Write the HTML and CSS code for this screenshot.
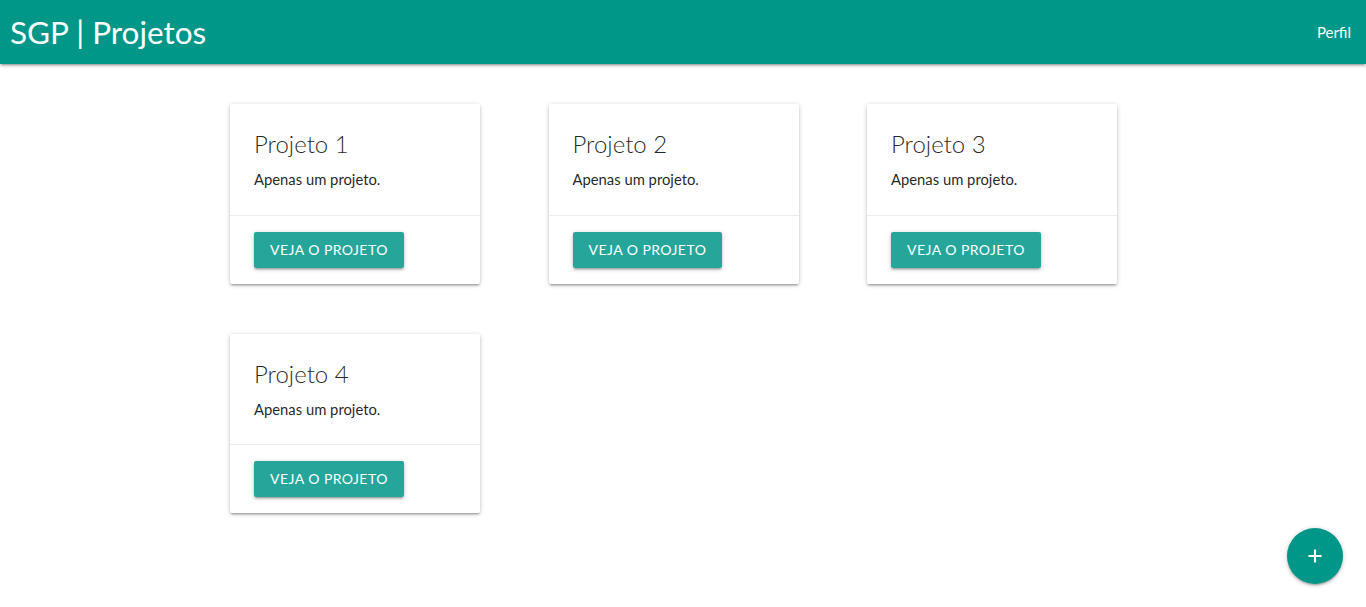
FILE: index.html
```html
<!DOCTYPE html>
<html lang="pt">
<head>
<meta charset="utf-8">
<title>SGP | Projetos</title>
<link rel="stylesheet" href="styles.css">
</head>
<body>
<nav class="navbar">
  <a class="brand" href="#">SGP | Projetos</a>
  <a class="nav-link" href="#">Perfil</a>
</nav>
<main class="grid">
  <div class="card">
    <div class="card-content">
      <span class="card-title">Projeto 1</span>
      <p>Apenas um projeto.</p>
    </div>
    <div class="card-action"><a class="btn" href="#">VEJA O PROJETO</a></div>
  </div>
  <div class="card">
    <div class="card-content">
      <span class="card-title">Projeto 2</span>
      <p>Apenas um projeto.</p>
    </div>
    <div class="card-action"><a class="btn" href="#">VEJA O PROJETO</a></div>
  </div>
  <div class="card">
    <div class="card-content">
      <span class="card-title">Projeto 3</span>
      <p>Apenas um projeto.</p>
    </div>
    <div class="card-action"><a class="btn" href="#">VEJA O PROJETO</a></div>
  </div>
  <div class="card">
    <div class="card-content">
      <span class="card-title">Projeto 4</span>
      <p>Apenas um projeto.</p>
    </div>
    <div class="card-action"><a class="btn" href="#">VEJA O PROJETO</a></div>
  </div>
</main>
<a class="fab" href="#" aria-label="Adicionar">
  <svg width="16" height="16" viewBox="0 0 16 16"><path d="M8 1.5v13M1.5 8h13" stroke="#fff" stroke-width="2" fill="none"/></svg>
</a>
</body>
</html>
```
FILE: styles.css
```css
* { box-sizing: border-box; }
html { font-size: 15px; }
body {
  margin: 0;
  min-height: 607px;
  font-family: Lato, "Open Sans", sans-serif;
  color: rgba(0,0,0,0.87);
  line-height: 1.5;
  background: #fff;
}
a { text-decoration: none; }
.navbar {
  height: 64px;
  background: #009688;
  display: flex;
  align-items: center;
  justify-content: space-between;
  padding: 0 15px 0 10px;
  box-shadow: 0 2px 2px 0 rgba(0,0,0,0.14), 0 3px 1px -2px rgba(0,0,0,0.12), 0 1px 5px 0 rgba(0,0,0,0.2);
}
.brand {
  color: #fff;
  font-size: 31.5px;
  line-height: 64px;
}
.nav-link {
  color: #fff;
  font-size: 15px;
  line-height: 64px;
}
.grid {
  display: grid;
  grid-template-columns: repeat(3, 250px);
  column-gap: 68.5px;
  row-gap: 50px;
  padding: 40px 0 40px 230px;
}
.card {
  background: #fff;
  border-radius: 2px;
  box-shadow: 0 2px 2px 0 rgba(0,0,0,0.14), 0 3px 1px -2px rgba(0,0,0,0.12), 0 1px 5px 0 rgba(0,0,0,0.2);
}
.card-content {
  padding: 24px;
}
.card-title {
  display: block;
  font-size: 24px;
  font-weight: 300;
  line-height: 32px;
  margin-bottom: 8px;
}
.card-content p {
  margin: 0;
  font-size: 14.8px;
  line-height: 22.5px;
}
.card-action {
  border-top: 1px solid rgba(160,160,160,0.2);
  padding: 16px 24px;
}
.btn {
  display: inline-block;
  height: 36px;
  line-height: 36px;
  padding: 0 16px;
  background: #26a69a;
  color: #fff;
  font-size: 14px;
  letter-spacing: .45px;
  border-radius: 2px;
  box-shadow: 0 2px 2px 0 rgba(0,0,0,0.14), 0 3px 1px -2px rgba(0,0,0,0.12), 0 1px 5px 0 rgba(0,0,0,0.2);
}
.fab {
  position: fixed;
  right: 23px;
  bottom: 23px;
  width: 56px;
  height: 56px;
  border-radius: 50%;
  background: #009688;
  display: flex;
  align-items: center;
  justify-content: center;
  box-shadow: 0 2px 2px 0 rgba(0,0,0,0.14), 0 3px 1px -2px rgba(0,0,0,0.12), 0 1px 5px 0 rgba(0,0,0,0.2);
}
```
